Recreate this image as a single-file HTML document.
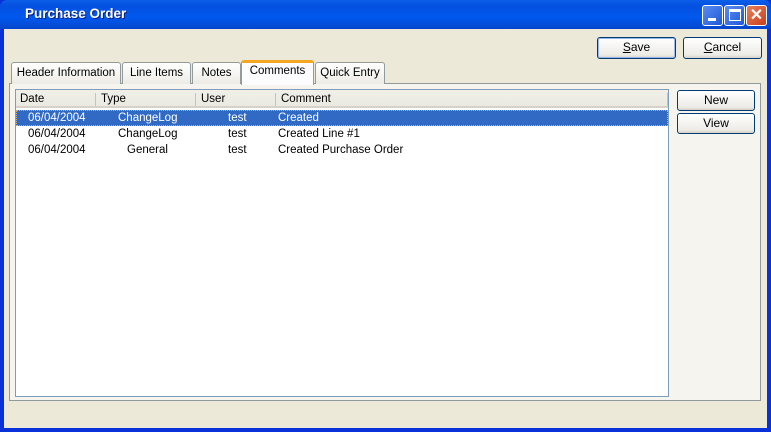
<!DOCTYPE html>
<html><head><style>
*{margin:0;padding:0;box-sizing:border-box}
body{width:771px;height:432px;overflow:hidden;background:#0831D9;font-family:"Liberation Sans",sans-serif;font-size:11.5px;position:relative}
.abs{position:absolute}
.title{left:0;top:0;width:771px;height:29px;background:linear-gradient(#0A5FE8,#0550E0 20%,#0058EE 60%,#0546CC);border-radius:7px 7px 0 0}
.title span{position:absolute;left:25px;top:6px;color:#fff;font-weight:bold;font-size:13.5px;text-shadow:1px 1px #0A1E80}
.client{left:4px;top:29px;width:763px;height:399px;background:#ECE9D8}
.wb{top:5px;width:21px;height:21px;border:1px solid #fff;border-radius:3px;background:linear-gradient(135deg,#5A8CF0,#2058D8)}
.btn{border:1px solid #003C74;border-radius:3px;background:linear-gradient(#FFFFFF,#ECEBE6 85%,#D6D0C5);text-align:center;color:#000;line-height:19px;font-size:12px}
.tab{top:62px;height:22px;border:1px solid #919B9C;border-bottom:none;border-radius:3px 3px 0 0;background:linear-gradient(#fff,#ECEBE5);text-align:center;line-height:20px}
.panel{left:9px;top:83px;width:752px;height:318px;background:#F5F4EE;border:1px solid #919B9C}
.list{left:15px;top:89px;width:654px;height:308px;background:#fff;border:1px solid #7F9DB9}
.hdr{left:16px;top:90px;width:652px;height:18px;background:linear-gradient(#F0EFE8,#EBEAE2);border-bottom:2px solid #D6D3C6}
.hdr div{position:absolute;top:3px}
.sep{position:absolute;top:2px;width:1px;height:13px;background:#C7C5B2}
.row{left:16px;width:652px;height:16px;line-height:16px}
.row div{position:absolute;top:0}
.sel{background:#316AC5;color:#fff;border:1px dotted #E0B060;line-height:14px}
</style></head><body>
<div class="abs title"><span>Purchase Order</span>
<div class="abs wb" style="left:702px"><div class="abs" style="left:5px;top:12px;width:8px;height:3px;background:#fff"></div></div>
<div class="abs wb" style="left:724px"><div class="abs" style="left:4px;top:3px;width:12px;height:12px;border:1px solid #fff;border-top-width:3px"></div></div>
<div class="abs wb" style="left:746px;background:linear-gradient(135deg,#E8805A,#C8401C);color:#fff;font-weight:bold;font-size:16px;text-align:center;line-height:19px">✕</div>
</div>
<div class="abs client"></div>
<div class="abs" style="left:0;top:29px;width:4px;height:403px;background:#0831D9"></div>
<div class="abs" style="left:767px;top:29px;width:4px;height:403px;background:#0831D9"></div>
<div class="abs" style="left:0;top:428px;width:771px;height:4px;background:#0831D9"></div>
<div class="abs btn" style="left:597px;top:37px;width:79px;height:22px;box-shadow:inset 0 0 0 1px #98B8EC"><u>S</u>ave</div>
<div class="abs btn" style="left:683px;top:37px;width:79px;height:22px"><u>C</u>ancel</div>
<div class="abs panel"></div>
<div class="abs tab" style="left:11px;width:110px">Header Information</div>
<div class="abs tab" style="left:122px;width:69px">Line Items</div>
<div class="abs tab" style="left:192px;width:49px">Notes</div>
<div class="abs tab" style="left:241px;top:60px;height:25px;width:73px;background:#FCFCFE;border-top:3px solid #F5A623;line-height:17px">Comments</div>
<div class="abs tab" style="left:315px;width:70px">Quick Entry</div>
<div class="abs list"></div>
<div class="abs hdr">
<div style="left:4px">Date</div><div class="sep" style="left:79px"></div>
<div style="left:85px">Type</div><div class="sep" style="left:179px"></div>
<div style="left:185px">User</div><div class="sep" style="left:259px"></div>
<div style="left:265px">Comment</div><div class="sep" style="left:651px"></div>
</div>
<div class="abs row sel" style="top:110px"><div style="left:11px">06/04/2004</div><div style="left:101px">ChangeLog</div><div style="left:211px">test</div><div style="left:261px">Created</div></div>
<div class="abs row" style="top:126px"><div style="left:12px">06/04/2004</div><div style="left:102px">ChangeLog</div><div style="left:212px">test</div><div style="left:262px">Created Line #1</div></div>
<div class="abs row" style="top:142px"><div style="left:12px">06/04/2004</div><div style="left:111px">General</div><div style="left:212px">test</div><div style="left:262px">Created Purchase Order</div></div>
<div class="abs btn" style="left:677px;top:90px;width:78px;height:21px">New</div>
<div class="abs btn" style="left:677px;top:113px;width:78px;height:21px">View</div>
</body></html>
